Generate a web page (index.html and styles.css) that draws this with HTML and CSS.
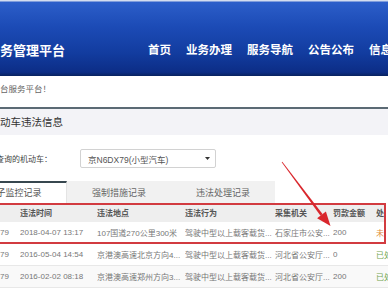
FILE: index.html
```html
<!DOCTYPE html>
<html lang="zh-CN">
<head>
    <meta charset="UTF-8">
    <meta name="viewport" content="width=device-width, initial-scale=1.0">
    <title>业务管理平台</title>

    <link rel="stylesheet" href="styles.css">
</head>
<body>

    <div class="header">
        <div class="logo">务管理平台</div>
        <ul class="nav">
            <li>首页</li>
            <li>业务办理</li>
            <li>服务导航</li>
            <li>公告公布</li>
            <li>信息公开</li>
        </ul>
    </div>

    <div class="welcome">台服务平台！</div>

    <div class="section-title">动车违法信息</div>

    <div class="query">
        <label class="query-label">查询的机动车：</label>
        <div class="select">
            <span>京N6DX79(小型汽车)</span>
            <svg class="caret" width="5" height="3" viewBox="0 0 5 3"><path d="M0 0h5L2.5 3z" fill="#333"/></svg>
        </div>
    </div>

    <div class="tabs">
        <div class="tab active">电子监控记录</div>
        <div class="tab">强制措施记录</div>
        <div class="tab">违法处理记录</div>
    </div>

    <div class="records">
        <div class="marked">
            <div class="row head">
                <span></span>
                <span>违法时间</span>
                <span>违法地点</span>
                <span>违法行为</span>
                <span>采集机关</span>
                <span>罚款金额</span>
                <span>处理状态</span>
            </div>
            <div class="row">
                <span>79</span>
                <span>2018-04-07 13:17</span>
                <span>107国道270公里300米</span>
                <span>驾驶中型以上载客载货...</span>
                <span>石家庄市公安...</span>
                <span>200</span>
                <span class="st-no">未处理</span>
            </div>
        </div>
        <div class="row">
            <span>79</span>
            <span>2016-05-04 14:54</span>
            <span>京港澳高速北京方向4...</span>
            <span>驾驶中型以上载客载货...</span>
            <span>河北省公安厅...</span>
            <span>0</span>
            <span class="st-done">已处理</span>
        </div>
        <div class="row alt">
            <span>79</span>
            <span>2016-02-02 08:18</span>
            <span>京港澳高速郑州方向3...</span>
            <span>驾驶中型以上载客载货...</span>
            <span>河北省公安厅...</span>
            <span>200</span>
            <span class="st-done">已处理</span>
        </div>
    </div>

    <!-- annotation arrow drawn over the table -->
    <svg class="arrow" width="388" height="291" viewBox="0 0 388 291">
        <polygon points="282.3,161.8 281.7,162.2 320.5,215.7 322.5,214.1" fill="#d9262c"/>
        <polygon points="330.5,226 325.9,211.6 317.1,218.2" fill="#d9262c"/>
    </svg>

</body>
</html>
```

FILE: styles.css
```css
* {
    margin: 0;
    padding: 0;
    box-sizing: border-box;
}

body {
    font-family: "Liberation Sans", "Noto Sans CJK SC", sans-serif;
    background-color: #fff;
    color: #666;
    width: 388px;
    height: 291px;
    overflow: hidden;
    position: relative;
}

.header {
    height: 76px;
    padding-top: 22px;
    display: flex;
    align-items: center;
    overflow: hidden;
    white-space: nowrap;
    background: linear-gradient(to bottom, #d3dcef 0, #d3dcef 1px, #2c5ec9 2px, #1c4bb6 35%, #123c9f 70%, #0c2d86 95%, #08225f 100%);
}

.logo {
    width: 148px;
    flex-shrink: 0;
    font-size: 13px;
    font-weight: bold;
    color: #fff;
}

.nav {
    display: flex;
    gap: 15px;
    list-style: none;
    font-size: 11.5px;
    font-weight: bold;
    color: #fff;
}

.welcome {
    height: 31px;
    line-height: 26px;
    font-size: 8.5px;
    color: #666;
}

.section-title {
    height: 28px;
    line-height: 26px;
    border-top: 2px solid #5b6a74;
    background-color: #f3f3f7;
    font-size: 10.5px;
    color: #333;
}

.query {
    display: flex;
    align-items: center;
    padding-top: 14px;
}

.query-label {
    width: 84px;
    margin-left: -4px;
    font-size: 8px;
    color: #444;
}

.select {
    width: 136px;
    height: 19px;
    display: flex;
    align-items: center;
    justify-content: space-between;
    padding: 0 5px 0 7px;
    border: 1px solid #d2d2d2;
    border-radius: 2px;
    font-size: 8.5px;
    color: #555;
}

.tabs {
    display: flex;
    margin-top: 13px;
    height: 22px;
}

.tab {
    width: 104px;
    flex-shrink: 0;
    text-align: center;
    line-height: 20px;
    font-size: 9px;
    color: #666;
    background-color: #f1f1f1;
    border-top: 2px solid #f1f1f1;
}

.tab.active {
    margin-left: -37px;
    background-color: #fff;
    border-top-color: #37474f;
    border-right: 1px solid #e4e4e4;
    color: #555;
}

.records {
    font-size: 8px;
}

.marked {
    margin-left: -4px;
    width: 390px;
    padding-left: 4px;
    outline: 2px solid #d23b40;
    outline-offset: -2px;
}

.row {
    display: grid;
    grid-template-columns: 20px 77px 88px 90px 58px 43px 1fr;
    align-items: center;
    height: 22px;
    border-bottom: 1px solid #e8e8e8;
    white-space: nowrap;
    color: #777;
}

.row span {
    overflow: hidden;
}

.row.head {
    height: 19px;
    border-bottom: none;
    background-color: #eee;
    font-weight: bold;
    color: #555;
}

.row.alt {
    background-color: #f9f9f9;
}

.st-no {
    color: #df8a38;
}

.st-done {
    color: #72a652;
}

.arrow {
    position: absolute;
    left: 0;
    top: 0;
    pointer-events: none;
}
```
